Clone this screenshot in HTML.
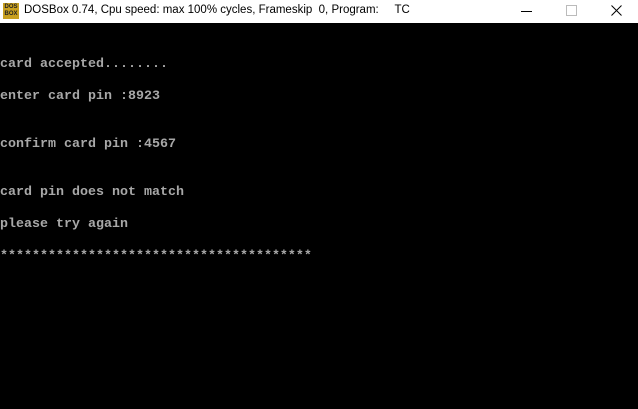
<!DOCTYPE html>
<html><head><style>
html,body{margin:0;padding:0;width:638px;height:409px;overflow:hidden;background:#000}
.tb{position:absolute;left:0;top:0;width:638px;height:23px;background:#fff;font-family:"Liberation Sans",sans-serif;font-size:11.5px;color:#000}
.ic{position:absolute;left:3px;top:3px;width:16px;height:16px;background:#c8a020;font:bold 6px/7px "Liberation Sans",sans-serif;color:#222;text-align:center;padding-top:1px;box-sizing:border-box}
.tt{position:absolute;left:24px;top:4px;white-space:pre}
.t{position:absolute;left:0;font-family:"Liberation Mono",monospace;font-size:13.33px;font-weight:bold;color:#a8a8a8;white-space:pre;line-height:16px}
</style></head><body>
<div class="tb">
<div class="ic">DOS<br>BOX</div>
<div class="tt">DOSBox 0.74, Cpu speed: max 100% cycles, Frameskip  0, Program:     TC</div>
<div style="position:absolute;left:521px;top:11px;width:11px;height:1px;background:#000"></div>
<div style="position:absolute;left:566px;top:5px;width:9px;height:9px;border:1px solid #bbb"></div>
<svg style="position:absolute;left:611px;top:5px" width="11" height="11"><path d="M0.5 0.5L10.5 10.5M10.5 0.5L0.5 10.5" stroke="#000" stroke-width="1"/></svg>
</div>
<div class="t" style="top:57px">card accepted........</div>
<div class="t" style="top:89px">enter card pin :8923</div>
<div class="t" style="top:137px">confirm card pin :4567</div>
<div class="t" style="top:185px">card pin does not match</div>
<div class="t" style="top:217px">please try again</div>
<div class="t" style="top:249px">***************************************</div>
</body></html>
